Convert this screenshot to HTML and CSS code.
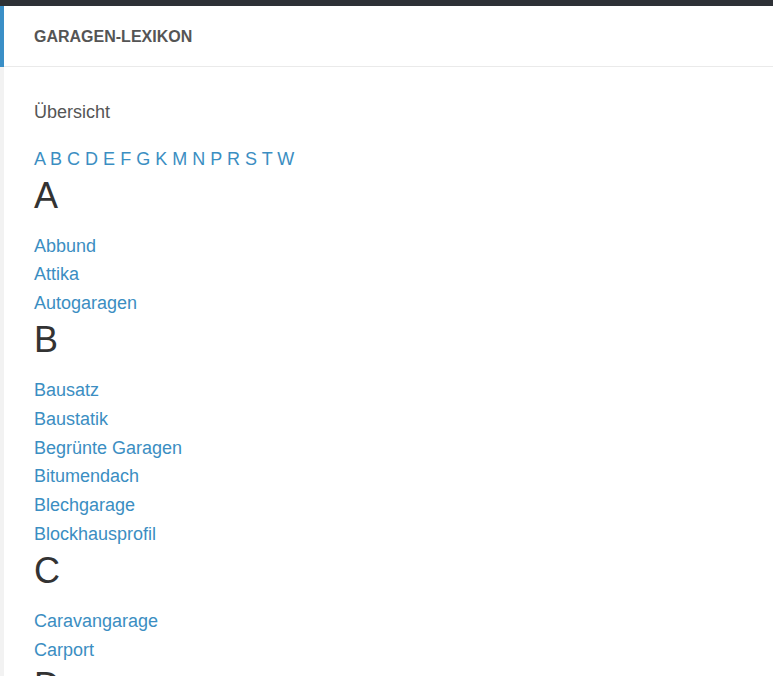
FILE: index.html
```html
<!DOCTYPE html>
<html lang="de">
<head>
<meta charset="utf-8">
<title>Garagen-Lexikon</title>
<link rel="stylesheet" href="styles.css">
</head>
<body>
<div class="topbar"></div>
<div class="page">
  <div class="panel">
    <div class="panel-head">
      <h3 class="panel-title">GARAGEN-LEXIKON</h3>
    </div>
    <div class="panel-body">
      <p class="overview">Übersicht</p>
      <nav class="alpha">
        <a href="#">A</a> <a href="#">B</a> <a href="#">C</a> <a href="#">D</a> <a href="#">E</a> <a href="#">F</a> <a href="#">G</a> <a href="#">K</a> <a href="#">M</a> <a href="#">N</a> <a href="#">P</a> <a href="#">R</a> <a href="#">S</a> <a href="#">T</a> <a href="#">W</a>
      </nav>
      <h2 class="letter">A</h2>
      <ul class="terms">
        <li><a href="#">Abbund</a></li>
        <li><a href="#">Attika</a></li>
        <li><a href="#">Autogaragen</a></li>
      </ul>
      <h2 class="letter">B</h2>
      <ul class="terms">
        <li><a href="#">Bausatz</a></li>
        <li><a href="#">Baustatik</a></li>
        <li><a href="#">Begrünte Garagen</a></li>
        <li><a href="#">Bitumendach</a></li>
        <li><a href="#">Blechgarage</a></li>
        <li><a href="#">Blockhausprofil</a></li>
      </ul>
      <h2 class="letter">C</h2>
      <ul class="terms">
        <li><a href="#">Caravangarage</a></li>
        <li><a href="#">Carport</a></li>
      </ul>
      <h2 class="letter">D</h2>
    </div>
  </div>
</div>
</body>
</html>
```

FILE: styles.css
```css
html, body {
  margin: 0;
  padding: 0;
  background: #f2f2f2;
  font-family: "Liberation Sans", Arial, sans-serif;
  color: #333;
  height: 100%;
  overflow: hidden;
}
.topbar {
  height: 6px;
  background: #2e3136;
}
.page {
  padding-left: 4px;
}
.panel {
  background: #fff;
  min-height: 700px;
}
.panel-head {
  height: 60px;
  border-bottom: 1px solid #eaeaea;
  box-shadow: -4px 0 0 #3a8fc7;
  display: flex;
  align-items: center;
  padding-left: 30px;
}
.panel-title {
  margin: 2px 0 0;
  font-size: 16px;
  font-weight: bold;
  color: #555;
}
.panel-body {
  padding: 31px 30px 0 30px;
}
.overview {
  margin: 0 0 18px;
  font-size: 18px;
  line-height: 28.8px;
  color: #555;
}
.alpha {
  font-size: 18px;
  line-height: 28.8px;
}
a {
  color: #3b8ec2;
  text-decoration: none;
}
.letter {
  margin: 2px 0 16px;
  font-size: 36px;
  line-height: 40px;
  font-weight: normal;
  color: #333;
}
.terms {
  list-style: none;
  margin: 0;
  padding: 0;
  font-size: 18px;
  line-height: 28.8px;
}
```
